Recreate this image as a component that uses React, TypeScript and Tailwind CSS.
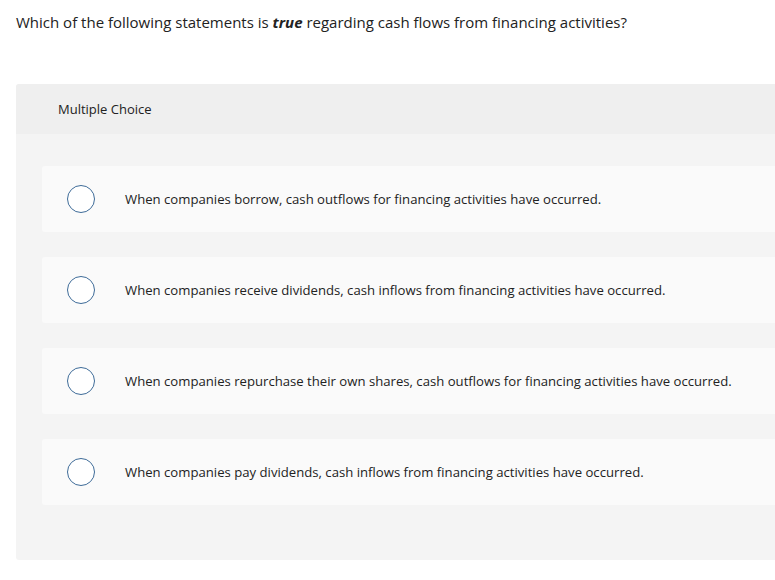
const options = [
  "When companies borrow, cash outflows for financing activities have occurred.",
  "When companies receive dividends, cash inflows from financing activities have occurred.",
  "When companies repurchase their own shares, cash outflows for financing activities have occurred.",
  "When companies pay dividends, cash inflows from financing activities have occurred.",
];

export default function App() {
  return (
    <div
      className="w-[775px] h-[580px] overflow-hidden bg-white text-[#222]"
      style={{ fontFamily: "'Open Sans', Lato, sans-serif" }}
    >
      <p className="pl-4 pt-[11px] text-[15px] leading-[22px]">
        Which of the following statements is{" "}
        <strong className="italic font-bold">true</strong> regarding cash flows
        from financing activities?
      </p>

      <div className="ml-4 mt-[51px] w-[800px] rounded-[3px] bg-[#f4f4f4] pb-[55px]">
        <div className="h-[50px] bg-[#efefef] rounded-t-[3px] pl-[42px] pt-[2px] flex items-center text-[13px]">
          Multiple Choice
        </div>
        <div className="pl-[26px] pt-8 flex flex-col gap-[25px]">
          {options.map((text) => (
            <label
              key={text}
              className="h-[66px] rounded-[3px] bg-[#fafafa] flex items-center"
            >
              <span className="ml-[25px] w-[28px] h-[28px] rounded-full border-[1.5px] border-[#3e6b98] bg-white shrink-0" />
              <span className="ml-[30px] mt-[2px] text-[13.15px] text-[#222]">
                {text}
              </span>
            </label>
          ))}
        </div>
      </div>
    </div>
  );
}
